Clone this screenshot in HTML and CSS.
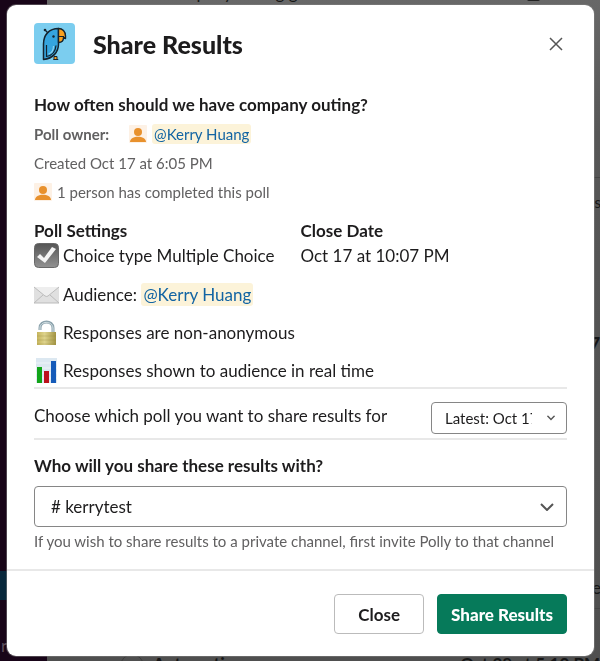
FILE: index.html
```html
<!DOCTYPE html>
<html lang="en">
<head>
    <meta charset="UTF-8">
    <meta name="viewport" content="width=device-width, initial-scale=1.0">
    <title>Share Results</title>
    <link rel="stylesheet" href="styles.css">
</head>
<body>
    <!-- Workspace behind the dialog -->
    <div class="workspace" aria-hidden="true">
        <div class="sidebar">
            <div class="sidebar-active"></div>
            <span class="peek peek-channel">r</span>
        </div>
        <div class="messages">
            <span class="peek peek-top">company outing g</span>
            <div class="peek-icon"></div>
            <div class="rule rule-upper"></div>
            <span class="peek peek-es">es</span>
            <span class="peek peek-count">7</span>
            <span class="peek peek-re">re</span>
            <div class="rule rule-lower"></div>
            <div class="peek-avatar"></div>
            <span class="peek peek-name">Automation</span>
            <span class="peek peek-date">Oct 28 at 5:10 PM</span>
        </div>
    </div>

    <div class="modal" role="dialog" aria-labelledby="modal-title">
        <header class="modal-header">
            <svg class="logo" viewBox="0 0 41 41" aria-hidden="true">
                <rect width="41" height="41" rx="4" fill="#7bcdef"/>
                <path d="M9.500 36.500V21C9.500 12 15 5.500 24.500 5.500V21C24.500 29 19 35.500 9.500 36.500z" fill="#35a5df" stroke="#14232e" stroke-width="1.500" stroke-linejoin="round"/>
                <path d="M24.500 5.500c4 0 7 3 7 7.500v2.500l-2-1c0 3-2 5-5 5z" fill="#f9a01f" stroke="#14232e" stroke-width="1.400" stroke-linejoin="round"/>
                <path d="M24.500 13.500h5.500" stroke="#14232e" stroke-width="1.200"/>
                <path d="M12.500 22v11.500c5-1 9-5 9.500-11" fill="none" stroke="#14232e" stroke-width="1.200"/>
                <path d="M14.500 31c3-1 5-4 5-8" fill="none" stroke="#8ad4f3" stroke-width="1.200"/>
                <path d="M11 7l3 3" stroke="#14232e" stroke-width="1.200"/>
                <circle cx="11" cy="7" r="1.300" fill="#14232e"/>
                <circle cx="19.500" cy="13.500" r="1.200" fill="#14232e"/>
                <path d="M20 33.500h3v2l1 1h-4.500l.5-1z" fill="#f9a01f" stroke="#14232e" stroke-width="1"/>
            </svg>
            <h1 class="modal-title" id="modal-title">Share Results</h1>
            <button class="dismiss" type="button" aria-label="Dismiss">
                <svg viewBox="0 0 14 14"><path d="M1 1l12 12M13 1L1 13"/></svg>
            </button>
        </header>

        <main class="modal-body">
            <h2 class="question">How often should we have company outing?</h2>
            <div class="context">
                <b class="owner-label">Poll owner:</b>
                <svg class="avatar" viewBox="0 0 18 18" aria-hidden="true">
                    <rect width="18" height="18" rx="1" fill="#fdf1e5"/>
                    <circle cx="9" cy="7" r="4" fill="#e8912d"/>
                    <path d="M1 17c0-7 16-7 16 0z" fill="#e8912d"/>
                </svg>
                <a class="mention" href="#">@Kerry Huang</a>
            </div>
            <p class="context">Created Oct 17 at 6:05 PM</p>
            <div class="context">
                <svg class="avatar" viewBox="0 0 18 18" aria-hidden="true">
                    <rect width="18" height="18" rx="1" fill="#fdf1e5"/>
                    <circle cx="9" cy="7" r="4" fill="#e8912d"/>
                    <path d="M1 17c0-7 16-7 16 0z" fill="#e8912d"/>
                </svg>
                <span>1 person has completed this poll</span>
            </div>

            <section class="fields">
                <div class="field">
                    <h3 class="field-title">Poll Settings</h3>
                    <div class="setting">
                        <svg class="emoji" viewBox="0 0 25 25" aria-hidden="true">
                            <defs>
                                <linearGradient id="check-fill" x1="0" y1="0" x2="0" y2="1">
                                    <stop offset="0" stop-color="#555"/>
                                    <stop offset="1" stop-color="#929292"/>
                                </linearGradient>
                            </defs>
                            <rect x="0.5" y="0.5" width="24" height="24" rx="4" fill="url(#check-fill)" stroke="#686868"/>
                            <path d="M3 14l3-3 4 4L18 4l4 2-11 14z" fill="#f4f4f4"/>
                        </svg>
                        <span>Choice type Multiple Choice</span>
                    </div>
                </div>
                <div class="field">
                    <h3 class="field-title">Close Date</h3>
                    <div class="setting">Oct 17 at 10:07 PM</div>
                </div>
            </section>

            <div class="setting-row">
                <svg class="emoji" viewBox="0 0 25 25" aria-hidden="true">
                    <rect y="5" width="25" height="16" fill="#e0e0e0"/>
                    <path d="M0 5h25L14 14q-2 1-3 0z" fill="#eee"/>
                    <path d="M0 5l11 9q2 1 3 0l11-9M0 21l9-8M25 21l-9-8" fill="none" stroke="#bbb"/>
                    <path d="M0 21h25" stroke="#bbb"/>
                </svg>
                <span>Audience: <a class="mention" href="#">@Kerry Huang</a></span>
            </div>
            <div class="setting-row">
                <svg class="emoji" viewBox="0 0 25 25" aria-hidden="true">
                    <defs>
                        <linearGradient id="lock-fill">
                            <stop offset="0" stop-color="#c5b45c"/>
                            <stop offset="0.4" stop-color="#ded38c"/>
                            <stop offset="1" stop-color="#a29443"/>
                        </linearGradient>
                    </defs>
                    <path d="M6 10V8c0-8 13-8 13 0v5" fill="none" stroke="#8ba2ac" stroke-width="3"/>
                    <path d="M6 10V8c0-7 12-8 13 0v5" fill="none" stroke="#d5e1e5" stroke-width="1"/>
                    <path d="M3 12h19v13H3z" fill="url(#lock-fill)"/>
                    <path d="M3 16h19M3 20h19M3 24h19" stroke="#95883e" stroke-opacity="0.3"/>
                </svg>
                <span>Responses are non-anonymous</span>
            </div>
            <div class="setting-row">
                <svg class="emoji" viewBox="0 0 25 25" aria-hidden="true">
                    <rect x="2" width="21" height="25" fill="#dce8f1"/>
                    <path d="M2 5h21M2 10h21M2 15h21M2 20h21" stroke="#eef4f8"/>
                    <path d="M3 9h5v16H3z" fill="#12a51a"/>
                    <path d="M10 13h5v12h-5z" fill="#bd111b"/>
                    <path d="M17 3h5v22h-5z" fill="#155bb9"/>
                </svg>
                <span>Responses shown to audience in real time</span>
            </div>

            <div class="choose">
                <label class="choose-label" for="poll">Choose which poll you want to share results for</label>
                <div class="select-wrap select-small">
                    <select id="poll">
                        <option>Latest: Oct 17</option>
                    </select>
                    <svg class="chevron" viewBox="0 0 14 8" aria-hidden="true"><path d="M2 1l5 5 5-5"/></svg>
                </div>
            </div>

            <label class="channel-label" for="channel">Who will you share these results with?</label>
            <div class="select-wrap select-large">
                <select id="channel">
                    <option># kerrytest</option>
                </select>
                <svg class="chevron" viewBox="0 0 14 8" aria-hidden="true"><path d="M1 1l6 6 6-6"/></svg>
            </div>
            <p class="hint">If you wish to share results to a private channel, first invite Polly to that channel</p>
        </main>

        <footer class="modal-footer">
            <button class="btn" type="button">Close</button>
            <button class="btn btn-primary" type="button">Share Results</button>
        </footer>
    </div>
</body>
</html>
```

FILE: styles.css
```css
* {
    box-sizing: border-box;
}

body, h1, h2, h3, p {
    margin: 0;
}

body {
    min-height: 100vh;
    padding: 5px 6px 5px 7px;
    overflow: hidden;
    font-family: Lato, "Liberation Sans", sans-serif;
    font-size: 17px;
    line-height: 24px;
    color: #1d1c1d;
}

button, select {
    font-family: inherit;
    color: inherit;
}

/* Workspace */
.workspace {
    position: fixed;
    inset: 0;
    display: flex;
}

.sidebar {
    position: relative;
    width: 47px;
    background: #180518;
}

.sidebar-active {
    position: absolute;
    top: 571px;
    width: 100%;
    height: 29px;
    background: #08283c;
}

.messages {
    position: relative;
    flex: 1;
    overflow: hidden;
    background: linear-gradient(#686868, #575757 20%, #4f4f4f);
}

.peek {
    position: absolute;
    white-space: nowrap;
    color: #161616;
}

.peek-channel {
    left: 1px;
    top: 634px;
    color: #5d505d;
}

.peek-top {
    left: 118px;
    top: -19px;
}

.peek-icon {
    position: absolute;
    left: 480px;
    top: -11px;
    width: 13px;
    height: 12px;
    border: 2px solid #222;
    border-radius: 2px;
}

.rule {
    position: absolute;
    right: 0;
    width: 10px;
    height: 1px;
    background: #454545;
}

.rule-upper {
    top: 177px;
}

.rule-lower {
    top: 608px;
}

.peek-es {
    right: -1px;
    top: 190px;
    font-size: 15px;
}

.peek-count {
    right: 0;
    top: 331px;
    font-weight: 900;
}

.peek-re {
    right: -1px;
    top: 576px;
}

.peek-avatar {
    position: absolute;
    left: 73px;
    top: 654px;
    width: 24px;
    height: 24px;
    border: 1px solid #3c3c3c;
    border-radius: 50%;
}

.peek-name {
    left: 106px;
    top: 652px;
    font-weight: 900;
}

.peek-date {
    right: 0;
    top: 652px;
    font-weight: 700;
}

/* Dialog */
.modal {
    position: relative;
    overflow: hidden;
    background: #fff;
    border-radius: 9px;
    box-shadow: 0 0 0 1px rgba(130, 130, 130, 0.5);
}

.modal-header {
    display: flex;
    align-items: center;
    padding: 18px 27px 0;
}

.logo {
    width: 41px;
    height: 41px;
}

.modal-title {
    flex: 1;
    margin-left: 18px;
    font-size: 25px;
    line-height: 32px;
    font-weight: 900;
}

.dismiss {
    display: flex;
    padding: 4px;
    border: 0;
    background: none;
}

.dismiss svg {
    width: 14px;
    height: 14px;
    fill: none;
    stroke: #555;
    stroke-width: 1.5;
}

.modal-body {
    padding: 29px 27px 16px;
}

.question {
    font-size: 17px;
    line-height: 24px;
    font-weight: 700;
}

.context {
    display: flex;
    align-items: center;
    height: 24px;
    margin-top: 5px;
    font-size: 15px;
    color: #616061;
}

.owner-label {
    margin-right: 20px;
}

.avatar {
    width: 18px;
    height: 18px;
    margin-right: 5px;
}

.mention {
    padding: 1px 2px;
    border-radius: 3px;
    background: #fcf3d9;
    color: #1264a3;
    line-height: 18px;
    text-decoration: none;
}

.fields {
    display: grid;
    grid-template-columns: 1fr 1fr;
    margin: 15px 0 14px;
}

.field-title {
    font-size: 17px;
    line-height: 24px;
    font-weight: 700;
}

.setting, .setting-row {
    display: flex;
    align-items: center;
    height: 25px;
}

.setting-row {
    margin-bottom: 13px;
}

.emoji {
    width: 25px;
    height: 25px;
    margin-right: 4px;
}

.choose {
    display: flex;
    align-items: flex-start;
    justify-content: space-between;
    height: 53px;
    margin-top: -9px;
    padding-top: 13px;
    border-top: 2px solid #e8e8e8;
    border-bottom: 2px solid #e8e8e8;
}

.choose-label {
    padding-top: 2px;
}

.select-wrap {
    position: relative;
}

.select-wrap select {
    width: 100%;
    height: 100%;
    border: 1px solid #868686;
    border-radius: 4px;
    background: #fff;
    appearance: none;
}

.chevron {
    position: absolute;
    top: 50%;
    transform: translateY(-50%);
    fill: none;
    stroke: #555;
    stroke-width: 2;
    pointer-events: none;
}

.select-small {
    width: 136px;
    height: 32px;
}

.select-small select {
    padding: 0 34px 0 13px;
    font-size: 15px;
}

.select-small .chevron {
    right: 11px;
    width: 10px;
}

.channel-label {
    display: block;
    margin-top: 14px;
    font-weight: 700;
}

.select-large {
    height: 41px;
    margin-top: 8px;
}

.select-large select {
    padding: 0 40px 0 16px;
    font-size: 17px;
}

.select-large .chevron {
    right: 13px;
    width: 14px;
}

.hint {
    margin-top: 2px;
    font-size: 15px;
    color: #616061;
}

.modal-footer {
    display: flex;
    justify-content: flex-end;
    gap: 13px;
    padding: 23px 27px 22px;
    border-top: 2px solid #e8e8e8;
}

.btn {
    height: 40px;
    padding: 0 23px;
    border: 1px solid #bbb;
    border-radius: 4px;
    background: #fff;
    font-size: 17px;
    font-weight: 700;
}

.btn-primary {
    padding: 0 13px;
    border-color: #067a5a;
    background: #067a5a;
    color: #fff;
    font-weight: 900;
}
```
